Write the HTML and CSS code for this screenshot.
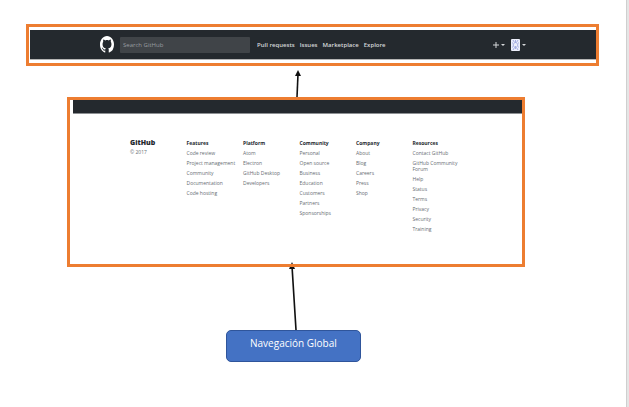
FILE: index.html
```html
<!DOCTYPE html>
<html lang="es">
<head>
<meta charset="utf-8">
<title>Navegación Global</title>
<link rel="stylesheet" href="styles.css">
</head>
<body>
<main class="sheet">
  <header class="frame frame-top">
    <div class="topbar">
      <a class="logo" href="#" aria-label="GitHub">
        <svg viewBox="0 0 16 16" width="14" height="17" preserveAspectRatio="none" fill="#fff" aria-hidden="true"><path d="M8 0C3.58 0 0 3.58 0 8c0 3.54 2.29 6.53 5.47 7.59.4.07.55-.17.55-.38 0-.19-.01-.82-.01-1.49-2.01.37-2.53-.49-2.69-.94-.09-.23-.48-.94-.82-1.13-.28-.15-.68-.52-.01-.53.63-.01 1.08.58 1.23.82.72 1.21 1.87.87 2.33.66.07-.52.28-.87.51-1.07-1.78-.2-3.64-.89-3.64-3.95 0-.87.31-1.59.82-2.15-.08-.2-.36-1.02.08-2.12 0 0 .67-.21 2.2.82.64-.18 1.32-.27 2-.27s1.36.09 2 .27c1.53-1.04 2.2-.82 2.2-.82.44 1.1.16 1.92.08 2.12.51.56.82 1.27.82 2.15 0 3.07-1.87 3.75-3.65 3.95.29.25.54.73.54 1.48 0 1.07-.01 1.93-.01 2.2 0 .21.15.46.55.38A8.01 8.01 0 0 0 16 8c0-4.42-3.58-8-8-8z"/></svg>
      </a>
      <input class="search" type="search" placeholder="Search GitHub" aria-label="Search GitHub">
      <nav class="links">
        <a href="#">Pull requests</a>
        <a href="#">Issues</a>
        <a href="#">Marketplace</a>
        <a href="#">Explore</a>
      </nav>
      <div class="tools">
        <button class="tool" type="button" aria-label="Create new">
          <svg width="12" height="8" viewBox="0 0 12 8" aria-hidden="true"><path d="M0 4h6M3 1v6" stroke="#d5d8da" fill="none"/><path d="M8 3h4l-2 2z" fill="#d5d8da"/></svg>
        </button>
        <button class="tool" type="button" aria-label="Profile">
          <svg width="15" height="12" viewBox="0 0 15 12" aria-hidden="true"><rect width="9" height="12" rx="1" fill="#eceefa"/><path d="M2 1l1.500 2.500L2 6l1.500 2.500L2 11M7 1L5.500 3.500 7 6 5.500 8.500 7 11M4.500 1v3M4.500 7v3M1 4h1M7 4h1M1 8h1M7 8h1" stroke="#a5aee2" fill="none"/><path d="M11 5h4l-2 2z" fill="#d5d8da"/></svg>
        </button>
      </div>
    </div>
  </header>

  <svg class="arrow arrow-up" width="10" height="31" viewBox="0 0 10 31" aria-hidden="true"><path d="M4 31L5 8" stroke="#111" stroke-width="1.6"/><path d="M5 4l3 6H2z" fill="#111"/></svg>

  <footer class="frame frame-footer">
    <div class="strip"></div>
    <div class="columns">
      <div class="brand">
        <strong class="brand-name">GitHub</strong>
        <small class="copy">© 2017</small>
      </div>
      <section>
        <h2>Features</h2>
        <ul>
          <li><a href="#">Code review</a></li>
          <li><a href="#">Project management</a></li>
          <li><a href="#">Community</a></li>
          <li><a href="#">Documentation</a></li>
          <li><a href="#">Code hosting</a></li>
        </ul>
      </section>
      <section>
        <h2>Platform</h2>
        <ul>
          <li><a href="#">Atom</a></li>
          <li><a href="#">Electron</a></li>
          <li><a href="#">GitHub Desktop</a></li>
          <li><a href="#">Developers</a></li>
        </ul>
      </section>
      <section>
        <h2>Community</h2>
        <ul>
          <li><a href="#">Personal</a></li>
          <li><a href="#">Open source</a></li>
          <li><a href="#">Business</a></li>
          <li><a href="#">Education</a></li>
          <li><a href="#">Customers</a></li>
          <li><a href="#">Partners</a></li>
          <li><a href="#">Sponsorships</a></li>
        </ul>
      </section>
      <section>
        <h2>Company</h2>
        <ul>
          <li><a href="#">About</a></li>
          <li><a href="#">Blog</a></li>
          <li><a href="#">Careers</a></li>
          <li><a href="#">Press</a></li>
          <li><a href="#">Shop</a></li>
        </ul>
      </section>
      <section>
        <h2>Resources</h2>
        <ul>
          <li><a href="#">Contact GitHub</a></li>
          <li><a href="#">GitHub Community<br>Forum</a></li>
          <li><a href="#">Help</a></li>
          <li><a href="#">Status</a></li>
          <li><a href="#">Terms</a></li>
          <li><a href="#">Privacy</a></li>
          <li><a href="#">Security</a></li>
          <li><a href="#">Training</a></li>
        </ul>
      </section>
    </div>
  </footer>

  <div class="callout">
    <svg class="arrow arrow-callout" width="12" height="68" viewBox="0 0 12 68" aria-hidden="true"><path d="M8 68L4 4" stroke="#111" stroke-width="1.6"/><path d="M4 0l3 7H1z" fill="#111"/></svg>
    <p class="label">Navegación Global</p>
  </div>
</main>
</body>
</html>
```

FILE: styles.css
```css
* {
  box-sizing: border-box;
}

body {
  margin: 0;
  background: #e5e5e5;
  font-family: "Open Sans", "Noto Sans", sans-serif;
}

a {
  color: inherit;
  text-decoration: none;
}

.sheet {
  display: flex;
  flex-direction: column;
  min-height: 100vh;
  margin-right: 2px;
  padding: 24px 27px 0 26px;
  background: #fff;
  border-right: 1px solid #cfcfcf;
}

.frame {
  border: 3px solid #ed7d31;
}

.frame-top {
  padding: 3px 0 3px 1px;
}

.topbar {
  display: flex;
  align-items: center;
  padding: 6px 70px 6px 70px;
  background: #24292e;
  border-bottom: 1px solid #b5b5b5;
}

.logo {
  display: flex;
  margin-right: 6px;
}

.search {
  width: 130px;
  height: 16px;
  padding: 0 3px;
  border: 0;
  border-radius: 1px;
  background: #404448;
  color: #fff;
  font: 6px "Open Sans", sans-serif;
}

.search::placeholder {
  color: #999da0;
  opacity: 1;
}

.links {
  display: flex;
  gap: 5px;
  margin-left: 7px;
  color: #d5d8da;
  font-size: 6px;
  font-weight: 600;
  line-height: 10px;
  white-space: nowrap;
}

.tools {
  display: flex;
  align-items: center;
  gap: 6px;
  margin-left: auto;
}

.tool {
  display: flex;
  padding: 0;
  border: 0;
  background: none;
}

.arrow {
  display: block;
  flex: none;
}

.arrow-up {
  margin-left: 267px;
}

.frame-footer {
  position: relative;
  z-index: 1;
  margin: 0 74px 0 41px;
  padding: 0 0 0 3px;
}

.strip {
  height: 14px;
  background: #24292e;
  border-bottom: 1px solid #8d9093;
}

.columns {
  display: grid;
  grid-template-columns: repeat(6, 1fr);
  padding: 24px 53px 32px 57px;
  color: #676d73;
  font-size: 5px;
  line-height: 6px;
  white-space: nowrap;
}

.brand {
  display: flex;
  flex-direction: column;
  gap: 2px;
}

.brand-name {
  color: #24292e;
  font-size: 7px;
  font-weight: 800;
  line-height: 9px;
}

.copy {
  font-size: 5px;
}

.columns h2 {
  margin: 2px 0 4px;
  color: #24292e;
  font-size: 5px;
  font-weight: 700;
  line-height: 6px;
}

.columns ul {
  display: flex;
  flex-direction: column;
  gap: 4px;
  margin: 0;
  padding: 0;
  list-style: none;
}

.callout {
  position: relative;
  align-self: flex-start;
  margin: 63px 0 0 200px;
}

.arrow-callout {
  position: absolute;
  bottom: 100%;
  left: 62px;
}

.label {
  margin: 0;
  padding: 5px 23px 11px;
  border: 1px solid #2f559b;
  border-radius: 5px;
  background: #4472c4;
  color: #fff;
  font-size: 10px;
  line-height: 14px;
  white-space: nowrap;
}
```
